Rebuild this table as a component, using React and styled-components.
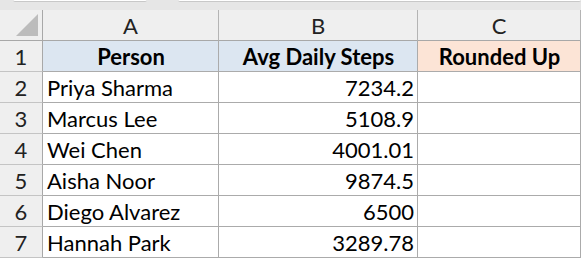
import React from 'react';
import styled, { createGlobalStyle } from 'styled-components';

const GlobalStyle = createGlobalStyle`
  html, body {
    margin: 0;
    padding: 0;
    background: #ffffff;
  }
  body {
    font-family: Lato, "Liberation Sans", sans-serif;
    overflow: hidden;
  }
`;

const Sheet = styled.div`
  width: 581px;
  height: 258px;
  overflow: hidden;
  background: #ffffff;
`;

const TopStrip = styled.div`
  height: 10px;
  background: #e6e6e6;
  display: flex;
  align-items: flex-start;
  padding-left: 13px;
  gap: 31px;
`;

const BarBox = styled.div`
  width: ${(p) => p.$width || 'auto'};
  flex: ${(p) => (p.$grow ? 1 : 'none')};
  height: 1px;
  background: #ffffff;
  border-bottom: 1px solid #c8c8c8;
  border-radius: 0 0 3px 3px;
`;

const Grid = styled.div`
  display: grid;
  grid-template-columns: 43px 176px 199px 1fr;
  grid-auto-rows: 31px;
`;

const Corner = styled.div`
  position: relative;
  background: #efefef;
  border-right: 1px solid #a8a8a8;
  border-bottom: 1px solid #a8a8a8;
  box-sizing: border-box;
`;

const CornerTriangle = styled.div`
  position: absolute;
  right: 4px;
  bottom: 4px;
  width: 0;
  height: 0;
  border-left: 22px solid transparent;
  border-bottom: 22px solid #bcbcbc;
`;

const ColHead = styled.div`
  background: #efefef;
  border-right: 1px solid #b4b4b4;
  border-bottom: 1px solid #a8a8a8;
  box-sizing: border-box;
  display: flex;
  align-items: center;
  justify-content: center;
  font-size: 22px;
  color: #222222;
  padding-top: 1px;
`;

const RowHead = styled.div`
  background: #efefef;
  border-right: 1px solid #a8a8a8;
  border-bottom: 1px solid #c4c4c4;
  box-sizing: border-box;
  display: flex;
  align-items: center;
  justify-content: center;
  font-size: 22px;
  color: #222222;
  padding-top: 1px;
`;

const Cell = styled.div`
  background: ${(p) => p.$bg || '#ffffff'};
  border-right: 1px solid #ababab;
  border-bottom: 1px solid #ababab;
  box-sizing: border-box;
  display: flex;
  align-items: center;
  justify-content: ${(p) =>
    p.$align === 'right' ? 'flex-end' : p.$align === 'center' ? 'center' : 'flex-start'};
  padding: 1px 3px 0 4px;
  font-size: 22px;
  font-weight: ${(p) => (p.$bold ? 700 : 400)};
  color: #000000;
  white-space: nowrap;
  overflow: hidden;
`;

const rows = [
  ['Priya Sharma', '7234.2'],
  ['Marcus Lee', '5108.9'],
  ['Wei Chen', '4001.01'],
  ['Aisha Noor', '9874.5'],
  ['Diego Alvarez', '6500'],
  ['Hannah Park', '3289.78'],
];

export default function App() {
  return (
    <Sheet>
      <GlobalStyle />
      <TopStrip>
        <BarBox $width="134px" />
        <BarBox $grow />
      </TopStrip>
      <Grid>
        <Corner>
          <CornerTriangle />
        </Corner>
        <ColHead>A</ColHead>
        <ColHead>B</ColHead>
        <ColHead>C</ColHead>

        <RowHead>1</RowHead>
        <Cell $bg="#dce6f1" $bold $align="center">Person</Cell>
        <Cell $bg="#dce6f1" $bold $align="center">Avg Daily Steps</Cell>
        <Cell $bg="#fce4d6" $bold $align="center">Rounded Up</Cell>

        {rows.map(([name, steps], i) => (
          <React.Fragment key={name}>
            <RowHead>{i + 2}</RowHead>
            <Cell>{name}</Cell>
            <Cell $align="right">{steps}</Cell>
            <Cell />
          </React.Fragment>
        ))}
      </Grid>
    </Sheet>
  );
}
